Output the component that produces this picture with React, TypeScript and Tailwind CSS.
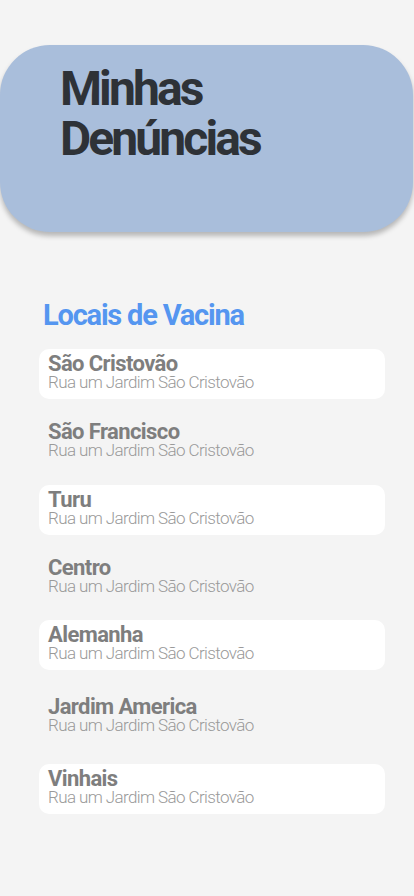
import React from "react";

const items = [
  { name: "São Cristovão", card: true, mt: "mt-[17px]" },
  { name: "São Francisco", card: false, mt: "mt-[18px]" },
  { name: "Turu", card: true, mt: "mt-[18px]" },
  { name: "Centro", card: false, mt: "mt-[18px]" },
  { name: "Alemanha", card: true, mt: "mt-[17px]" },
  { name: "Jardim America", card: false, mt: "mt-[22px]" },
  { name: "Vinhais", card: true, mt: "mt-[22px]" },
];

export default function App() {
  return (
    <div
      className="min-h-[896px] w-[414px] bg-[#f4f4f4] pt-[45px]"
      style={{ fontFamily: "Roboto, 'Liberation Sans', sans-serif" }}
    >
      <div className="h-[187px] w-[413px] rounded-[50px] bg-[#a9bedb] pl-[60px] pt-[19px] shadow-[0_4px_5px_rgba(0,0,0,0.25)]">
        <h1 className="text-[48px] font-bold leading-[50px] tracking-[-2.9px] text-[#2e3237]">
          Minhas
          <br />
          Denúncias
        </h1>
      </div>
      <div className="pl-[39px] pr-[29px] pt-[66px]">
        <h2 className="pl-[4px] text-[29px] font-bold leading-[34px] tracking-[-1.2px] text-[#5596f0]">
          Locais de Vacina
        </h2>
        {items.map((it) => (
          <div
            key={it.name}
            className={`${it.mt} h-[50px] rounded-[10px] pl-[9px] pt-[5px] ${it.card ? "bg-white" : ""}`}
          >
            <div className="text-[22px] font-bold leading-[20px] tracking-[-0.6px] text-[#7e7e7e]">
              {it.name}
            </div>
            <div className="text-[17px] font-light leading-[17px] tracking-[-0.6px] text-[#9a9a9a]">
              Rua um Jardim São Cristovão
            </div>
          </div>
        ))}
      </div>
    </div>
  );
}
